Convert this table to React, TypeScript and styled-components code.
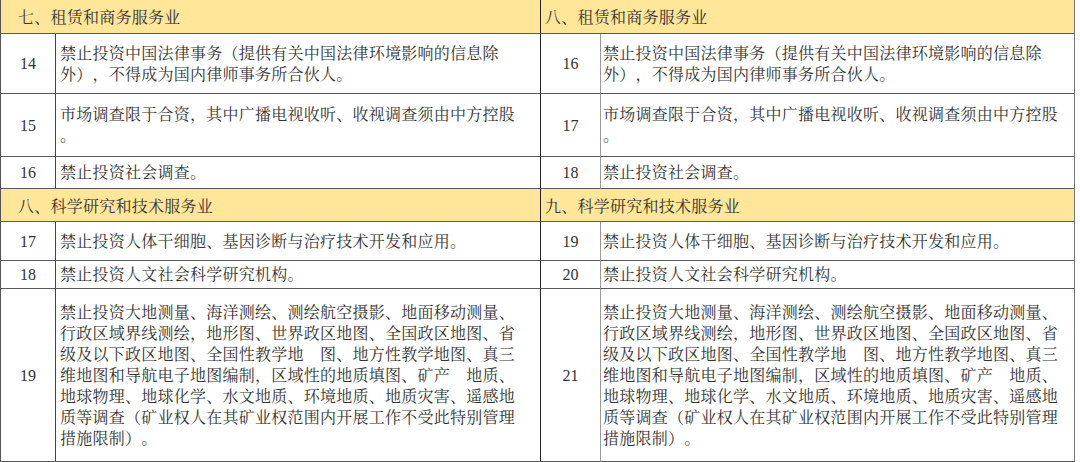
import React from 'react';
import styled, { createGlobalStyle } from 'styled-components';

const GlobalStyle = createGlobalStyle`
  html, body {
    margin: 0;
    padding: 0;
    background: #fff;
    overflow: hidden;
  }
`;

type Side = 'left' | 'right';

type Item = {
    num: string;
    lines: string[];
};

type Section = {
    title: string;
    items: Item[];
};

type Block = {
    left: Section;
    right: Section;
    heights: number[]; // header first, then one per item
};

const FONT = `"Liberation Serif", "Noto Serif CJK SC", "Noto Sans CJK SC", serif`;

const Sheet = styled.div<{ rows: string }>`
  display: grid;
  grid-template-columns: 55px 485px 60px 474px;
  grid-template-rows: ${props => props.rows};
  border-left: 1px solid #555;
  font-family: ${FONT};
  font-size: 16px;
  color: #333;
  width: 1075px;
  box-sizing: border-box;
  text-spacing-trim: space-all;
`;

const HeaderCell = styled.div<{ side: Side }>`
  grid-column: span 2;
  background: #ffe699;
  display: flex;
  align-items: center;
  padding-left: ${props => props.side === 'left' ? '17px' : '4px'};
  letter-spacing: 0.25px;
  border-bottom: 1px solid #5a5a5a;
  border-right: 1px solid ${props => props.side === 'left' ? '#222' : '#777'};
  box-sizing: border-box;
  white-space: nowrap;
`;

const NumCell = styled.div<{ side: Side }>`
  display: flex;
  align-items: center;
  justify-content: center;
  border-bottom: 1px solid #5a5a5a;
  border-right: 1px solid ${props => props.side === 'left' ? '#444' : '#9a9a9a'};
  box-sizing: border-box;
  padding-top: 1px;
`;

const TextCell = styled.div<{ side: Side }>`
  display: flex;
  flex-direction: column;
  justify-content: center;
  padding-left: ${props => props.side === 'left' ? '4px' : '2px'};
  border-bottom: 1px solid #5a5a5a;
  border-right: 1px solid ${props => props.side === 'left' ? '#222' : '#777'};
  box-sizing: border-box;
  line-height: 21px;
  letter-spacing: 0.25px;
`;

const Line = styled.div`
  white-space: pre;
`;

const blocks: Block[] = [
    {
        heights: [34, 60, 63, 32],
        left: {
            title: '七、租赁和商务服务业',
            items: [
                { num: '14', lines: ['禁止投资中国法律事务（提供有关中国法律环境影响的信息除', '外），不得成为国内律师事务所合伙人。'] },
                { num: '15', lines: ['市场调查限于合资，其中广播电视收听、收视调查须由中方控股', '。'] },
                { num: '16', lines: ['禁止投资社会调查。'] },
            ],
        },
        right: {
            title: '八、租赁和商务服务业',
            items: [
                { num: '16', lines: ['禁止投资中国法律事务（提供有关中国法律环境影响的信息除', '外），不得成为国内律师事务所合伙人。'] },
                { num: '17', lines: ['市场调查限于合资，其中广播电视收听、收视调查须由中方控股', '。'] },
                { num: '18', lines: ['禁止投资社会调查。'] },
            ],
        },
    },
    {
        heights: [33, 39, 28, 173],
        left: {
            title: '八、科学研究和技术服务业',
            items: [
                { num: '17', lines: ['禁止投资人体干细胞、基因诊断与治疗技术开发和应用。'] },
                { num: '18', lines: ['禁止投资人文社会科学研究机构。'] },
                { num: '19', lines: [] },
            ],
        },
        right: {
            title: '九、科学研究和技术服务业',
            items: [
                { num: '19', lines: ['禁止投资人体干细胞、基因诊断与治疗技术开发和应用。'] },
                { num: '20', lines: ['禁止投资人文社会科学研究机构。'] },
                { num: '21', lines: [] },
            ],
        },
    },
];

const surveyLines = [
    '禁止投资大地测量、海洋测绘、测绘航空摄影、地面移动测量、',
    '行政区域界线测绘，地形图、世界政区地图、全国政区地图、省',
    '级及以下政区地图、全国性教学地　图、地方性教学地图、真三',
    '维地图和导航电子地图编制，区域性的地质填图、矿产　地质、',
    '地球物理、地球化学、水文地质、环境地质、地质灾害、遥感地',
    '质等调查（矿业权人在其矿业权范围内开展工作不受此特别管理',
    '措施限制）。',
];
blocks[1].left.items[2].lines = surveyLines;
blocks[1].right.items[2].lines = surveyLines;

const rowHeights = blocks.flatMap(b => b.heights).map(h => `${h}px`).join(' ');

export default function App() {
    return (
        <>
            <GlobalStyle />
            <Sheet rows={rowHeights}>
                {blocks.map((block, bi) => (
                    <React.Fragment key={bi}>
                        <HeaderCell side="left">{block.left.title}</HeaderCell>
                        <HeaderCell side="right">{block.right.title}</HeaderCell>
                        {block.left.items.map((item, i) => {
                            const other = block.right.items[i];
                            return (
                                <React.Fragment key={i}>
                                    <NumCell side="left">{item.num}</NumCell>
                                    <TextCell side="left">
                                        {item.lines.map((l, li) => <Line key={li}>{l}</Line>)}
                                    </TextCell>
                                    <NumCell side="right">{other.num}</NumCell>
                                    <TextCell side="right">
                                        {other.lines.map((l, li) => <Line key={li}>{l}</Line>)}
                                    </TextCell>
                                </React.Fragment>
                            );
                        })}
                    </React.Fragment>
                ))}
            </Sheet>
        </>
    );
}
